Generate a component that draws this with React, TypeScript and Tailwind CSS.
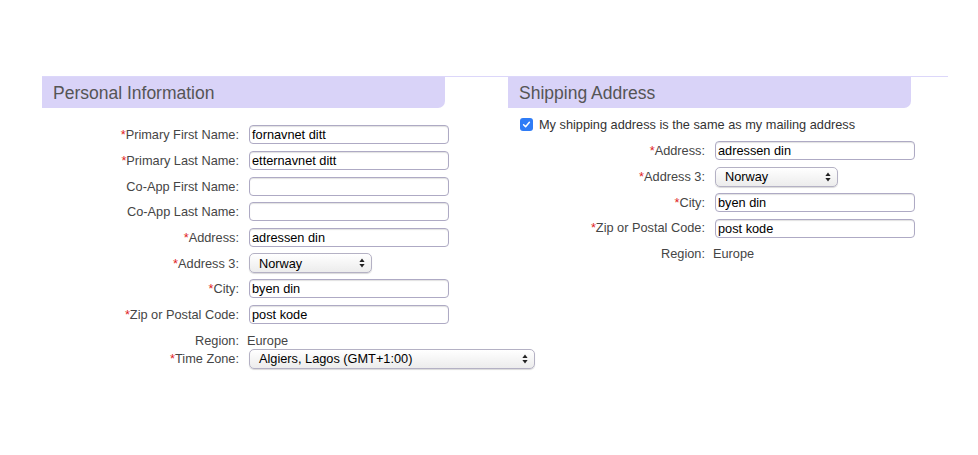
import React from 'react';

type Row =
  | { kind: 'input'; label: string; required?: boolean; value: string }
  | { kind: 'select'; label: string; required?: boolean; value: string; width: string; tall?: boolean }
  | { kind: 'text'; label: string; value: string };

const personal: Row[] = [
  { kind: 'input', label: 'Primary First Name:', required: true, value: 'fornavnet ditt' },
  { kind: 'input', label: 'Primary Last Name:', required: true, value: 'etternavnet ditt' },
  { kind: 'input', label: 'Co-App First Name:', value: '' },
  { kind: 'input', label: 'Co-App Last Name:', value: '' },
  { kind: 'input', label: 'Address:', required: true, value: 'adressen din' },
  { kind: 'select', label: 'Address 3:', required: true, value: 'Norway', width: 'w-[123px]', tall: true },
  { kind: 'input', label: 'City:', required: true, value: 'byen din' },
  { kind: 'input', label: 'Zip or Postal Code:', required: true, value: 'post kode' },
  { kind: 'text', label: 'Region:', value: 'Europe' },
  { kind: 'select', label: 'Time Zone:', required: true, value: 'Algiers, Lagos (GMT+1:00)', width: 'w-[286px]' },
];

const shipping: Row[] = [
  { kind: 'input', label: 'Address:', required: true, value: 'adressen din' },
  { kind: 'select', label: 'Address 3:', required: true, value: 'Norway', width: 'w-[123px]', tall: true },
  { kind: 'input', label: 'City:', required: true, value: 'byen din' },
  { kind: 'input', label: 'Zip or Postal Code:', required: true, value: 'post kode' },
  { kind: 'text', label: 'Region:', value: 'Europe' },
];

function Arrows() {
  return (
    <svg width="6" height="10" viewBox="0 0 6 10" className="shrink-0">
      <path d="M3 0.5 L5.6 4 H0.4 Z" fill="#222" />
      <path d="M3 9.5 L5.6 6 H0.4 Z" fill="#222" />
    </svg>
  );
}

function FormRow({ row }: { row: Row }) {
  const required = row.kind !== 'text' && row.required;
  const height =
    row.kind === 'text' ? 'h-[21px] pt-[5px]' : row.kind === 'select' && !row.tall ? 'h-[20px]' : 'h-[25.7px]';
  return (
    <div className={`flex items-center gap-[10px] ${height}`}>
      <div className="w-[197px] shrink-0 text-right text-[12.75px] text-[#454545]">
        {required && <span className="text-[#e0201b]">*</span>}
        {row.label}
      </div>
      {row.kind === 'input' && (
        <div className="h-[19px] w-[200px] shrink-0 rounded-[4px] border border-[#aeaac4] bg-white px-[2px] text-[12.75px] leading-[17px] text-black shadow-[inset_0_1px_1px_rgba(0,0,0,0.12)]">
          {row.value}
        </div>
      )}
      {row.kind === 'select' && (
        <div
          className={`${row.width} flex h-[20px] shrink-0 items-center justify-between rounded-[5px] border border-[#b4b1c4] bg-gradient-to-b from-white to-[#ececec] pl-[9px] pr-[6px] text-[12.75px] text-black shadow-[0_1px_1px_rgba(0,0,0,0.15)]`}
        >
          <span>{row.value}</span>
          <Arrows />
        </div>
      )}
      {row.kind === 'text' && <div className="-ml-[2px] text-[12.75px] text-[#454545]">{row.value}</div>}
    </div>
  );
}

function Header({ title }: { title: string }) {
  return (
    <div className="flex h-[31px] w-[403px] items-center rounded-br-[7px] bg-[#d9d3f8] pl-[11px] pt-[1px] text-[17.5px] text-[#555]">
      {title}
    </div>
  );
}

export default function App() {
  return (
    <div className="h-[455px] w-[978px] overflow-hidden bg-white pt-[76px] font-['Liberation_Sans',Arial,sans-serif]">
      <div className="ml-[42px] flex w-[906px] border-t border-[#dcd7fa]">
        {/* Personal Information */}
        <div className="w-[466px] shrink-0">
          <Header title="Personal Information" />
          <div className="mt-[14px] flex flex-col">
            {personal.map((r) => (
              <FormRow key={r.label} row={r} />
            ))}
          </div>
        </div>

        {/* Shipping Address */}
        <div className="w-[440px] shrink-0">
          <Header title="Shipping Address" />
          <label className="ml-[12px] mt-[7px] flex items-center gap-[6px] text-[12.75px] text-[#333]">
            <span className="flex h-[13px] w-[13px] items-center justify-center rounded-[3px] bg-[#2f7cf6]">
              <svg width="9" height="9" viewBox="0 0 9 9">
                <path
                  d="M1.6 4.7 L3.6 6.7 L7.4 2.2"
                  fill="none"
                  stroke="white"
                  strokeWidth="1.5"
                  strokeLinecap="round"
                  strokeLinejoin="round"
                />
              </svg>
            </span>
            My shipping address is the same as my mailing address
          </label>
          <div className="mt-[4px] flex flex-col">
            {shipping.map((r) => (
              <FormRow key={r.label} row={r} />
            ))}
          </div>
        </div>
      </div>
    </div>
  );
}
